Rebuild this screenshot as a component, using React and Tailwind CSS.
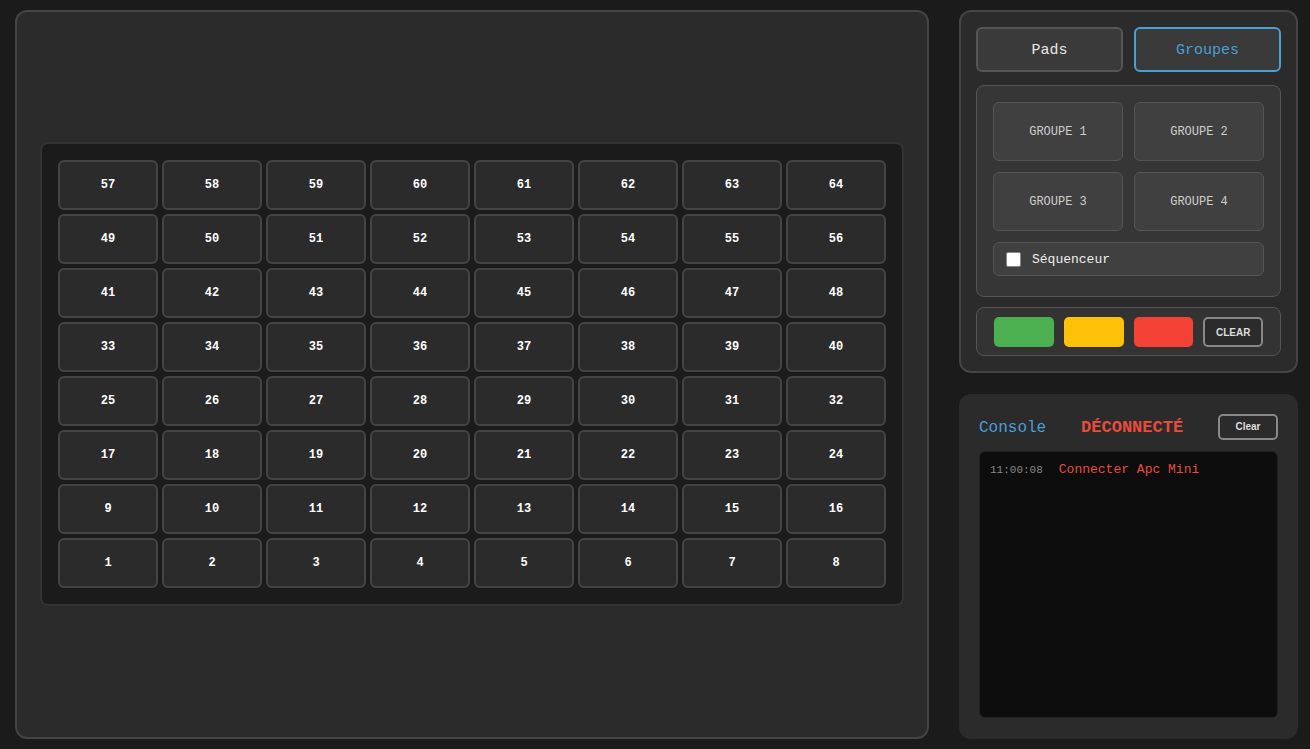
const mono = { fontFamily: '"Liberation Mono", "Courier New", monospace' };

const rows = [8, 7, 6, 5, 4, 3, 2, 1];

function Pad({ n }) {
  return (
    <button className="h-[50px] w-[100px] rounded-[6px] border-2 border-[#444] bg-[#2b2b2b] text-[12px] font-bold text-white">
      {n}
    </button>
  );
}

export default function App() {
  return (
    <div
      className="flex h-[749px] w-[1310px] gap-[30px] bg-[#1b1b1b] pt-[10px] pr-[12px] pb-[10px] pl-[15px]"
      style={mono}
    >
      {/* pad grid */}
      <div className="flex flex-1 items-center justify-center rounded-[12px] border-2 border-[#444] bg-[#2b2b2b] pb-[1px]">
        <div className="grid grid-cols-8 gap-[4px] rounded-[8px] border-2 border-[#333] bg-[#1b1b1b] p-[16px]">
          {rows.map((r) =>
            [1, 2, 3, 4, 5, 6, 7, 8].map((c) => (
              <Pad key={r + "-" + c} n={(r - 1) * 8 + c} />
            ))
          )}
        </div>
      </div>

      {/* right column */}
      <div className="flex w-[339px] flex-col gap-[21px]">
        <div className="flex h-[363px] flex-col rounded-[12px] border-2 border-[#444] bg-[#2b2b2b] p-[15px]">
          <div className="flex gap-[11px]">
            <button className="h-[45px] flex-1 rounded-[6px] border-2 border-[#555] bg-[#3a3a3a] pt-[3px] text-[15px] text-[#e8e8e8]">
              Pads
            </button>
            <button className="h-[45px] flex-1 rounded-[6px] border-2 border-[#4a9fd5] bg-[#3a3a3a] pt-[3px] text-[15px] text-[#4a9fd5]">
              Groupes
            </button>
          </div>

          <div className="mt-[13px] flex flex-col gap-[11px] rounded-[8px] border border-[#555] bg-[#363636] px-[16px] pt-[16px] pb-[20px]">
            <div className="grid grid-cols-2 gap-[11px]">
              {["GROUPE 1", "GROUPE 2", "GROUPE 3", "GROUPE 4"].map((g) => (
                <button
                  key={g}
                  className="h-[59px] rounded-[6px] border border-[#555] bg-[#404040] text-[12px] text-[#cfcfcf]"
                >
                  {g}
                </button>
              ))}
            </div>
            <label className="flex h-[34px] items-center gap-[11px] rounded-[6px] border border-[#555] bg-[#404040] px-[12px]">
              <span className="h-[15px] w-[15px] rounded-[2px] border border-[#888] bg-white" />
              <span className="pt-[1px] text-[13px] text-[#eee]">Séquenceur</span>
            </label>
          </div>

          <div className="mt-[10px] flex items-center gap-[10px] rounded-[8px] border border-[#555] bg-[#333] px-[17px] pt-[9px] pb-[8px]">
            <button className="h-[30px] w-[60px] rounded-[5px] bg-[#4caf50]" />
            <button className="h-[30px] w-[60px] rounded-[5px] bg-[#ffc107]" />
            <button className="h-[30px] w-[60px] rounded-[5px] bg-[#f44336]" />
            <button
              className="h-[30px] w-[60px] rounded-[5px] border-2 border-[#888] bg-[#2b2b2b] text-[10px] font-bold text-[#ddd]"
              style={{ fontFamily: '"Liberation Sans", Arial, sans-serif' }}
            >
              CLEAR
            </button>
          </div>
        </div>

        {/* console */}
        <div className="flex flex-1 flex-col gap-[10px] rounded-[12px] bg-[#2b2b2b] px-[20px] pt-[19px] pb-[21px]">
          <div className="flex items-center justify-between">
            <span className="pt-[2px] text-[16px] text-[#4a9fd5]">Console</span>
            <span className="pt-[2px] text-[17px] font-bold text-[#e74c3c]">DÉCONNECTÉ</span>
            <button
              className="h-[26px] w-[60px] rounded-[5px] border-2 border-[#888] bg-[#2b2b2b] text-[10px] font-bold text-[#ddd]"
              style={{ fontFamily: '"Liberation Sans", Arial, sans-serif' }}
            >
              Clear
            </button>
          </div>
          <div className="flex-1 rounded-[6px] border border-[#222] bg-[#0d0d0d] px-[10px] pt-[8px] pb-[10px]">
            <div className="flex items-baseline gap-[16px]">
              <span className="text-[11px] text-[#888]">11:00:08</span>
              <span className="text-[13px] text-[#e74c3c]">Connecter Apc Mini</span>
            </div>
          </div>
        </div>
      </div>
    </div>
  );
}
